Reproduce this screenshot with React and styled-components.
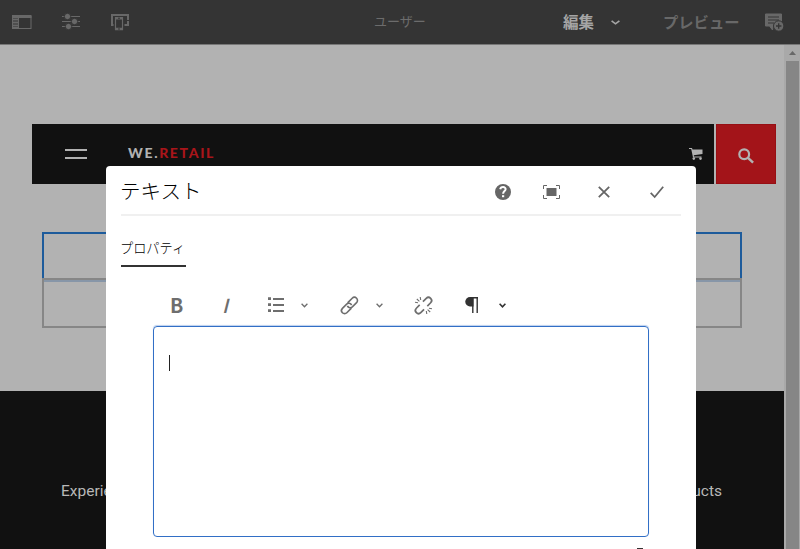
import React from 'react';
import styled, { createGlobalStyle } from 'styled-components';

const GlobalStyle = createGlobalStyle`
  * { box-sizing: border-box; }
  body { margin: 0; overflow: hidden; font-family: "Noto Sans CJK JP", sans-serif; }
  svg { display: block; flex: none; overflow: visible; }
`;

const Screen = styled.div`
  position: relative;
  width: 800px;
  height: 549px;
  overflow: hidden;
  display: flex;
  flex-direction: column;
  background: #b2b2b2;
`;

const TopBar = styled.header`
  flex: none;
  height: 45px;
  display: flex;
  align-items: center;
  padding-left: 12px;
  background: #343434;
  border-bottom: 1px solid #777;
  color: #686868;
`;

const Slot = styled.span`
  flex: none;
  display: flex;
  align-items: center;
  margin-left: ${(p) => p.$gap || 0}px;
  width: ${(p) => p.$w}px;
  height: ${(p) => p.$h || 20}px;
  color: ${(p) => p.$color || 'inherit'};
`;

const BarText = styled.span`
  flex: none;
  margin-left: ${(p) => p.$gap}px;
  width: ${(p) => p.$w}px;
  padding-bottom: 2px;
  font-size: ${(p) => p.$size}px;
  line-height: 20px;
  font-weight: ${(p) => (p.$bold ? 700 : 400)};
  color: ${(p) => p.$color};
  white-space: nowrap;
`;

const Workspace = styled.div`
  flex: 1;
  display: flex;
  min-height: 0;
`;

const Page = styled.main`
  width: 784px;
  padding-top: 79px;
  display: flex;
  flex-direction: column;
`;

const SiteNav = styled.nav`
  display: flex;
  flex: none;
  gap: 2px;
  height: 60px;
  margin: 0 8px 0 32px;
`;

const NavMain = styled.div`
  flex: 1;
  display: flex;
  align-items: center;
  padding: 0 11px 0 33px;
  background: #111;
`;

const Burger = styled.div`
  width: 22px;
  height: 10px;
  border-top: 2px solid #b2b2b2;
  border-bottom: 2px solid #b2b2b2;
`;

const Logo = styled.div`
  flex: 1;
  margin-left: 41px;
  padding-bottom: 2px;
  font: 900 14px/20px Lato, sans-serif;
  letter-spacing: 1.65px;
  color: #b2b2b2;
`;

const LogoAccent = styled.span`
  color: #a8151a;
`;

const SearchButton = styled.div`
  width: 60px;
  display: flex;
  align-items: center;
  justify-content: center;
  padding-top: 3px;
  background: #a31419;
  border: 1px solid #960f14;
`;

const Placeholders = styled.section`
  flex: none;
  margin: 48px 42px 63px;
`;

const SelectedBox = styled.div`
  height: 46px;
  border: 2px solid #1d5b9b;
  border-bottom: 0;
`;

const EmptyBox = styled.div`
  height: 50px;
  border: 2px solid #868686;
  box-shadow: inset 0 2px 0 #8796a8;
`;

const Footer = styled.footer`
  flex: 1;
  display: flex;
  justify-content: space-between;
  padding: 90px 62px 0 61px;
  background: #111;
  color: #b8b8b8;
  font: 400 15.5px/20px Roboto, sans-serif;
`;

const Scrollbar = styled.div`
  width: 16px;
  padding: 0 1px 0 2px;
  background: #a9a9a9;
`;

const ScrollArrow = styled.div`
  height: 16px;
  display: flex;
  align-items: center;
  justify-content: center;
`;

const ScrollThumb = styled.div`
  height: 488px;
  background: #868686;
`;

const Dialog = styled.section`
  position: absolute;
  left: 106px;
  top: 166px;
  width: 590px;
  height: 400px;
  padding: 0 15px;
  background: #fff;
  border-radius: 4px 4px 0 0;
  color: #323232;
`;

const DialogHeader = styled.header`
  height: 50px;
  display: flex;
  align-items: center;
  padding-top: 3px;
  border-bottom: 2px solid #f0f0f0;
  color: #666;
`;

const Title = styled.h1`
  margin: 0;
  width: 374px;
  padding-bottom: 4px;
  font-size: 20.5px;
  line-height: 28px;
  font-weight: 300;
  text-indent: -1px;
  color: #000;
`;

const Tab = styled.div`
  width: 65px;
  height: 27px;
  margin-top: 24px;
  border-bottom: 2px solid #323232;
  font-size: 13.2px;
  line-height: 16px;
  font-weight: 300;
  text-indent: -1px;
  white-space: nowrap;
  color: #000;
`;

const RichToolbar = styled.div`
  display: flex;
  align-items: center;
  height: 30px;
  margin: 23px 0 0 49px;
  color: #6e6e6e;
`;

const Letter = styled.span`
  padding-bottom: 1px;
  margin-left: ${(p) => (p.$italic ? -1 : 0)}px;
  font: ${(p) => (p.$italic ? 'italic 500' : '700')} 19.5px/20px "Noto Sans CJK JP", sans-serif;
`;

const Editor = styled.div`
  width: 496px;
  height: 211px;
  margin: 6px 0 0 32px;
  padding: 28px 15px;
  border: 1px solid #326fc6;
  border-radius: 4px;
  box-shadow: 0 -1px 1px #bcd0ee;
`;

const Caret = styled.div`
  width: 1px;
  height: 16px;
  background: #222;
`;

const Resize = styled.div`
  width: 6px;
  height: 5px;
  margin: 11px 0 0 516px;
  background: #333;
`;

const Svg = ({ w, h, children, ...rest }) => (
  <svg width={w} height={h} viewBox={`0 0 ${w} ${h}`} fill="none" stroke="currentColor" {...rest}>
    {children}
  </svg>
);

const RailIcon = () => (
  <Svg w={20} h={14}>
    <path d="M.5 0v14M0 13.5h19M19 1v13" />
    <path d="M0 1.5h19.5" strokeWidth="3" />
    <path d="M6.5 2v12" strokeWidth="1" />
    <path d="M1 4.5h5M1 7.5h5M1 10.5h5M1 13h5" strokeWidth="2" />
  </Svg>
);

const SlidersIcon = () => (
  <Svg w={20} h={16}>
    <path d="M1 2.5h18M1 7.5h18M1 12.5h18" />
    <g fill="currentColor" stroke="#343434">
      <circle cx="6.5" cy="2.5" r="3.2" />
      <circle cx="13.5" cy="7.5" r="3.2" />
      <circle cx="7.5" cy="12.5" r="3.2" />
    </g>
  </Svg>
);

const DeviceIcon = () => (
  <Svg w={20} h={18}>
    <path d="M5 12H2V2h16v10h-4" strokeWidth="2" />
    <path d="M16 7.5h3" stroke="#343434" />
    <path d="M3.5 4h11v14h-11z" fill="#343434" stroke="none" />
    <path d="M5.5 4.5h7v12h-7z" fill="#343434" strokeWidth="1.2" />
    <path d="M5 5.3h8M5 16h8" strokeWidth="2.4" />
    <path d="M8 5.2h2M8 16h2" stroke="#343434" />
  </Svg>
);

const AnnotateIcon = () => (
  <Svg w={20} h={18}>
    <path d="M1.5 1h16v11H9.5l-1 5-3-4h-4z" fill="currentColor" strokeWidth="1" />
    <path d="M4 4h11M4 7h11M4 10h6" stroke="#343434" />
    <circle cx="14.7" cy="13" r="5.2" fill="currentColor" stroke="#343434" />
    <path d="M12 13h5.4M14.7 10.3v5.4" stroke="#343434" strokeWidth="1.3" />
  </Svg>
);

const Chevron = ({ w = 7, stroke = 1.3 }) => (
  <Svg w={w} h={5} strokeWidth={stroke}>
    <path d={`M.6 .8l${w / 2 - 0.6} 3 ${w / 2 - 0.6}-3`} />
  </Svg>
);

const CartIcon = () => (
  <Svg w={14} h={12} stroke="none" fill="#b2b2b2">
    <path d="M0 0h3l.5 1.5H13.5V6L4.8 7.2 5 8.5h7.5v1H4L2.2 1H0z" />
    <circle cx="4.8" cy="10.6" r="1.3" />
    <circle cx="11.5" cy="10.6" r="1.3" />
  </Svg>
);

const SearchIcon = () => (
  <Svg w={16} h={16} stroke="#b2b2b2" strokeWidth="2.2">
    <circle cx="6.2" cy="6.2" r="4.9" />
    <path d="M9.7 9.7l5.4 5" strokeWidth="2.5" />
  </Svg>
);

const HelpIcon = () => (
  <Svg w={16} h={16}>
    <circle cx="8" cy="8" r="8" fill="currentColor" stroke="none" />
    <path d="M5.2 5.2C5.8 2.3 10.8 2.4 10.6 5.3 10.5 7 8.1 7.2 8.1 9.7" stroke="#fff" strokeWidth="2" />
    <path d="M7 11.2h2.2v2H7z" fill="#fff" stroke="none" />
  </Svg>
);

const FullscreenIcon = () => (
  <Svg w={17} h={14}>
    <path d="M.5 4V.5H4M13 .5h3.5V4M.5 10v3.5H4M13 13.5h3.5V10" />
    <path d="M3.5 3h10v8h-10z" fill="currentColor" stroke="none" />
  </Svg>
);

const CloseIcon = () => (
  <Svg w={12} h={12} strokeWidth="1.8">
    <path d="M.8.8l10.4 10.4M11.2.8L.8 11.2" />
  </Svg>
);

const CheckIcon = () => (
  <Svg w={14} h={12} strokeWidth="1.8">
    <path d="M.7 6.8l4 4.2L13.2.7" />
  </Svg>
);

const ListIcon = () => (
  <Svg w={16} h={16}>
    <path d="M5 2h11M5 8h11M5 14h11" strokeWidth="2" />
    <path d="M0 1.6h3M0 7.6h3M0 13.6h3" strokeWidth="2.8" />
  </Svg>
);

const LinkIcon = () => (
  <Svg w={17} h={17} strokeWidth="1.6">
    <g transform="rotate(-45 8.5 8.5)">
      <path d="M8 11.7H1.5a3.1 3.1 0 0 1 0-6.2H7.5a3.1 3.1 0 0 1 2.8 4.2" />
      <path d="M9 5.3h6.5a3.1 3.1 0 0 1 0 6.2H9.5a3.1 3.1 0 0 1-2.8-4.2" />
    </g>
  </Svg>
);

const UnlinkIcon = () => (
  <Svg w={17} h={17}>
    <g transform="rotate(-45 8.5 8.5)" strokeWidth="1.7">
      <path d="M6.2 11.6H1.5a3.1 3.1 0 0 1 0-6.2h4.7" />
      <path d="M10.8 5.4h4.7a3.1 3.1 0 0 1 0 6.2h-4.7" />
    </g>
    <path d="M5.2 0l.5 3M1.8 2l2.6 2.4M0 5.3l3 .5M11.8 17l-.5-3M15.2 15l-2.6-2.4M17 11.7l-3-.5" strokeWidth="1.1" />
  </Svg>
);

const ParagraphIcon = () => (
  <Svg w={14} h={16}>
    <path d="M8.5 0v9.5H5A4.75 4.75 0 0 1 5 0z" fill="currentColor" stroke="none" />
    <path d="M5 .7h8M7.8 0v16M12.2 0v16" strokeWidth="1.4" />
  </Svg>
);

export default function App() {
  return (
    <Screen>
      <GlobalStyle />
      <TopBar>
        <Slot $w={20}><RailIcon /></Slot>
        <Slot $w={20} $gap={29}><SlidersIcon /></Slot>
        <Slot $w={20} $gap={29}><DeviceIcon /></Slot>
        <BarText $gap={244} $w={52} $size={13} $color="#6c6c6c">ユーザー</BarText>
        <BarText $gap={137} $w={31} $size={15.5} $bold $color="#a5a5a5">編集</BarText>
        <Slot $w={9} $gap={17} $color="#a5a5a5"><Chevron w={9} stroke={1.7} /></Slot>
        <BarText $gap={43} $w={78} $size={15.3} $bold $color="#686868">プレビュー</BarText>
        <Slot $w={20} $gap={23}><AnnotateIcon /></Slot>
      </TopBar>
      <Workspace>
        <Page>
          <SiteNav>
            <NavMain>
              <Burger />
              <Logo>WE.<LogoAccent>RETAIL</LogoAccent></Logo>
              <CartIcon />
            </NavMain>
            <SearchButton><SearchIcon /></SearchButton>
          </SiteNav>
          <Placeholders>
            <SelectedBox />
            <EmptyBox />
          </Placeholders>
          <Footer>
            <span>Experience</span>
            <span>Products</span>
          </Footer>
        </Page>
        <Scrollbar>
          <ScrollArrow>
            <Svg w={7} h={4} stroke="none" fill="#686868"><path d="M0 4L3.5 0 7 4z" /></Svg>
          </ScrollArrow>
          <ScrollThumb />
        </Scrollbar>
      </Workspace>
      <Dialog>
        <DialogHeader>
          <Title>テキスト</Title>
          <Slot $w={16}><HelpIcon /></Slot>
          <Slot $w={17} $gap={32}><FullscreenIcon /></Slot>
          <Slot $w={12} $gap={38}><CloseIcon /></Slot>
          <Slot $w={14} $gap={40}><CheckIcon /></Slot>
        </DialogHeader>
        <Tab>プロパティ</Tab>
        <RichToolbar>
          <Slot $w={14}><Letter>B</Letter></Slot>
          <Slot $w={7} $gap={39}><Letter $italic>I</Letter></Slot>
          <Slot $w={16} $gap={38}><ListIcon /></Slot>
          <Slot $w={7} $gap={17}><Chevron /></Slot>
          <Slot $w={17} $gap={33}><LinkIcon /></Slot>
          <Slot $w={7} $gap={18}><Chevron /></Slot>
          <Slot $w={17} $gap={32}><UnlinkIcon /></Slot>
          <Slot $w={14} $gap={33} $color="#323232"><ParagraphIcon /></Slot>
          <Slot $w={7} $gap={20} $color="#323232"><Chevron stroke={1.6} /></Slot>
        </RichToolbar>
        <Editor><Caret /></Editor>
        <Resize />
      </Dialog>
    </Screen>
  );
}
